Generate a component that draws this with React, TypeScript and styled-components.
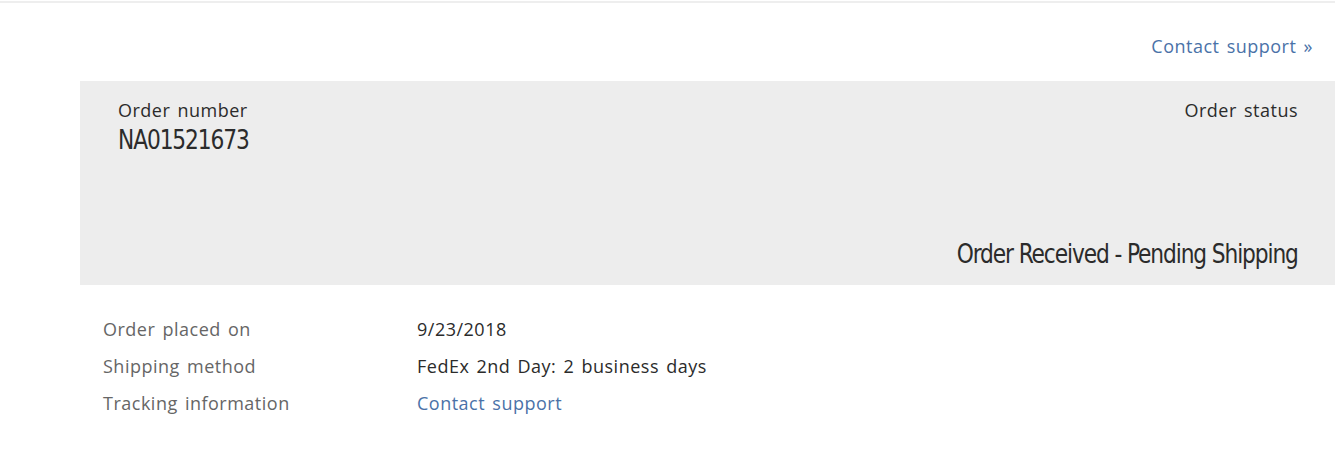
import styled, { createGlobalStyle } from 'styled-components';

const GlobalStyle = createGlobalStyle`
  body {
    margin: 0;
    background: #fff;
    font-family: "Open Sans", Lato, "Liberation Sans", sans-serif;
    color: #2b2b2b;
  }
`;

const details = [
  { label: 'Order placed on', value: '9/23/2018' },
  { label: 'Shipping method', value: 'FedEx 2nd Day: 2 business days' },
  { label: 'Tracking information', value: 'Contact support', link: true },
];

export default function App() {
  return (
    <Page>
      <GlobalStyle />
      <TopRule />
      <Content>
        <SupportRow>
          <Link href="#">Contact support &raquo;</Link>
        </SupportRow>
        <Summary>
          <SummaryTop>
            <Field>
              <FieldLabel>Order number</FieldLabel>
              <Display $align="left">NA01521673</Display>
            </Field>
            <FieldLabel>Order status</FieldLabel>
          </SummaryTop>
          <StatusRow>
            <Display $align="right">Order Received - Pending Shipping</Display>
          </StatusRow>
        </Summary>
        <Details>
          {details.map((d) => (
            <DetailRow key={d.label}>
              <DetailLabel>{d.label}</DetailLabel>
              {d.link ? <Link href="#">{d.value}</Link> : <DetailValue>{d.value}</DetailValue>}
            </DetailRow>
          ))}
        </Details>
      </Content>
    </Page>
  );
}

const Page = styled.div`
  width: 1335px;
  height: 451px;
  overflow: hidden;
`;

const TopRule = styled.div`
  margin-top: 1px;
  height: 2px;
  background: #eeeeee;
`;

const Content = styled.div`
  padding-left: 80px;
`;

const SupportRow = styled.div`
  display: flex;
  justify-content: flex-end;
  height: 78px;
  align-items: center;
  padding: 8px 22px 0 0;
  box-sizing: border-box;
`;

const Text = styled.span`
  font-size: 18px;
  letter-spacing: 0.5px;
  word-spacing: 2px;
`;

const Link = styled(Text).attrs({ as: 'a' })`
  color: #4a72a8;
  text-decoration: none;
`;

const Summary = styled.div`
  background: #ededed;
  height: 204px;
  box-sizing: border-box;
  padding: 16px 37px 14px 38px;
  display: flex;
  flex-direction: column;
  justify-content: space-between;
`;

const SummaryTop = styled.div`
  display: flex;
  justify-content: space-between;
  align-items: flex-start;
`;

const Field = styled.div`
  display: flex;
  flex-direction: column;
  align-items: flex-start;
`;

const FieldLabel = styled(Text)`
  display: block;
  line-height: 26px;
  color: #2b2b2b;
`;

const StatusRow = styled.div`
  display: flex;
  justify-content: flex-end;
`;

const Display = styled.div<{ $align: 'left' | 'right' }>`
  font-family: "DejaVu Sans Condensed", "Liberation Sans", sans-serif;
  font-stretch: condensed;
  font-size: 26px;
  line-height: 34px;
  color: #2b2b2b;
  letter-spacing: -1.2px;
  transform: scaleX(0.93);
  transform-origin: ${(p) => p.$align} center;
`;

const Details = styled.div`
  padding: 25px 0 0 23px;
  display: flex;
  flex-direction: column;
`;

const DetailRow = styled.div`
  display: grid;
  grid-template-columns: 314px 1fr;
  height: 37px;
  align-items: center;
`;

const DetailLabel = styled(Text)`
  color: #666666;
`;

const DetailValue = styled(Text)`
  color: #2b2b2b;
`;
